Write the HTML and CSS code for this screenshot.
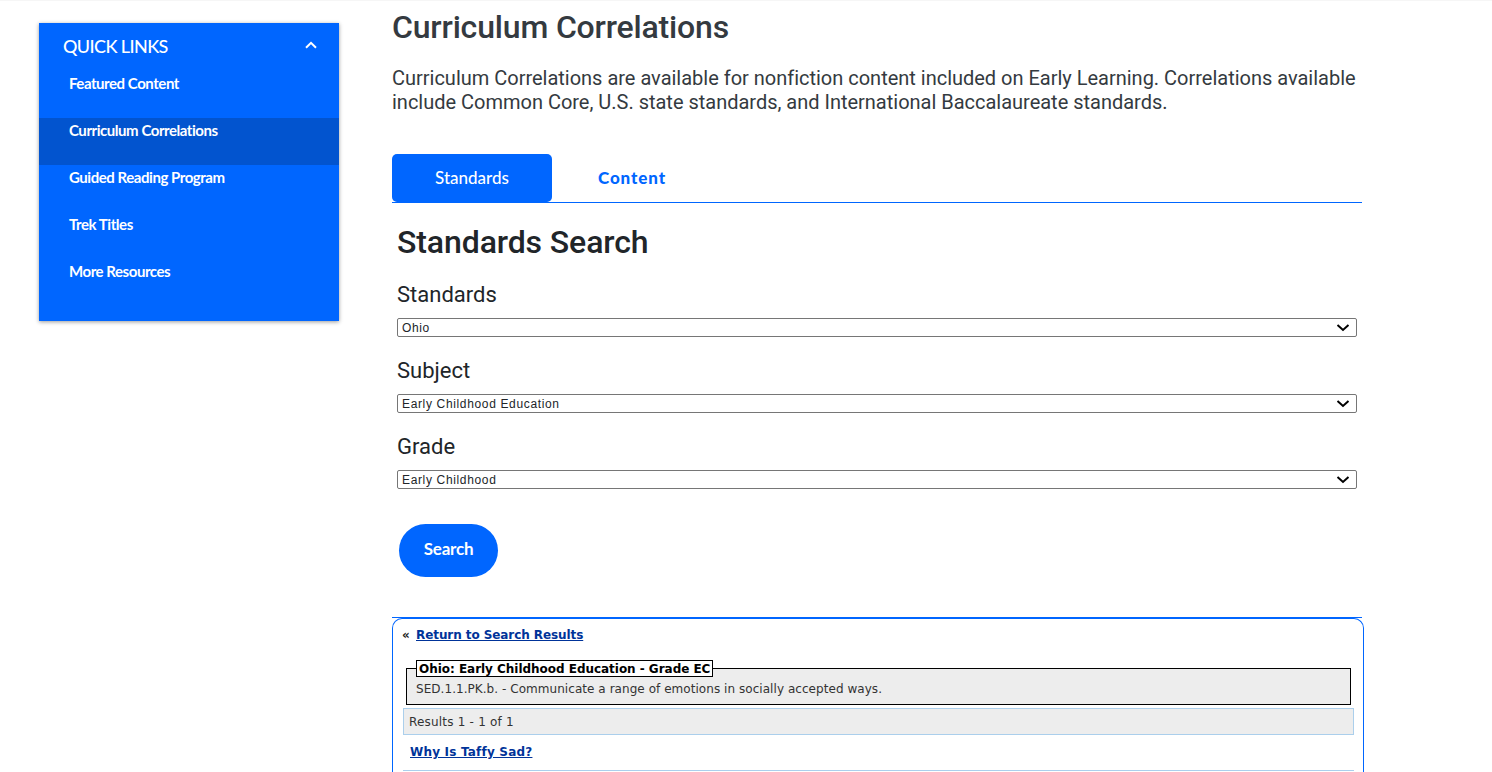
FILE: index.html
```html
<!DOCTYPE html>
<html lang="en">
<head>
  <meta charset="UTF-8" />
  <meta name="viewport" content="width=device-width, initial-scale=1.0" />
  <title>Curriculum Correlations</title>
  <link rel="stylesheet" href="styles.css">
</head>
<body>

<div class="page">
  <!-- quick links -->
  <aside class="quick">
    <div class="quickHead">
      <span>QUICK LINKS</span>
      <svg class="chev" width="12" height="8" viewBox="0 0 12 8" aria-hidden="true"><path d="M1 6.800 6 1.800l5 5" fill="none" stroke="#fff" stroke-width="2"/></svg>
    </div>
    <nav>
      <a href="#">Featured Content</a>
      <a href="#" class="current">Curriculum Correlations</a>
      <a href="#">Guided Reading Program</a>
      <a href="#">Trek Titles</a>
      <a href="#">More Resources</a>
    </nav>
  </aside>

  <main>
    <h1>Curriculum Correlations</h1>
    <p class="intro">Curriculum Correlations are available for nonfiction content included on Early Learning. Correlations available include Common Core, U.S. state standards, and International Baccalaureate standards.</p>

    <div class="tabs">
      <a href="#" class="tab active">Standards</a>
      <a href="#" class="tab">Content</a>
    </div>

    <!-- search form -->
    <section class="search">
      <h2>Standards Search</h2>
      <label for="std">Standards</label>
      <select id="std"><option>Ohio</option></select>
      <label for="sub">Subject</label>
      <select id="sub"><option>Early Childhood Education</option></select>
      <label for="gr">Grade</label>
      <select id="gr"><option>Early Childhood</option></select>
      <button type="button" class="go">Search</button>
    </section>

    <!-- results -->
    <section class="results">
      <div class="back"><span class="arrows">&laquo;</span><a href="#">Return to Search Results</a></div>
      <fieldset>
        <legend>Ohio: Early Childhood Education - Grade EC</legend>
        SED.1.1.PK.b. - Communicate a range of emotions in socially accepted ways.
      </fieldset>
      <div class="count">Results 1 - 1 of 1</div>
      <div class="item"><a href="#">Why Is Taffy Sad?</a></div>
    </section>
  </main>
</div>

</body>
</html>
```

FILE: styles.css
```css
* { box-sizing:border-box; margin:0; padding:0; }
body { font-family:Roboto,sans-serif; background:#fff; color:#212529; }
.page { display:flex; align-items:flex-start; height:772px; padding-left:39px; overflow:hidden; box-shadow:inset 0 1px 0 #f6f6f6; }

/* sidebar */
.quick { width:300px; height:298px; margin-top:23px; background:#06f; color:#fff;
         box-shadow:0 1px 4px rgba(0,0,0,.4); flex:none; }
.quickHead { display:flex; justify-content:space-between; align-items:center;
             height:48px; padding:0 22px 2px 24px; font:500 18px "Lato",sans-serif; letter-spacing:-.6px; }
.chev { margin-bottom:3px; }
.quick nav a { display:block; height:47px; padding:2px 0 0 30px; color:#fff; text-decoration:none;
               font:700 15px/20px "Lato",sans-serif; letter-spacing:-.45px; }
.quick nav a.current { background:#0254cf; }

/* main column */
main { width:972px; margin-left:53px; flex:none; }
h1 { font-size:32px; font-weight:500; line-height:36px; color:#343a40; margin-top:9px; letter-spacing:-.17px; }
.intro { width:970px; font-size:20px; line-height:24px; color:#343a40; margin-top:21px; letter-spacing:-.01px; }

.tabs { display:flex; width:970px; height:49px; margin-top:40px; border-bottom:1px solid #06f; }
.tab { width:160px; height:48px; border-radius:5px 5px 0 0; text-align:center;
       font:900 17px/47px "Lato",sans-serif; letter-spacing:.9px; color:#06f; text-decoration:none; }
.tab.active { background:#06f; color:#fff; border-radius:5px; font-weight:500; letter-spacing:0; }

.search { width:970px; height:415px; padding:20px 5px 0; border-bottom:1px solid #06f; }
h2 { font-size:32px; font-weight:500; line-height:38px; color:#212529; letter-spacing:-.1px; }
label { display:block; font-size:22px; line-height:26px; margin-top:21px; color:#212529; }
select { display:block; width:960px; height:19px; margin-top:10px; padding-left:4px; font:12px "Liberation Sans",sans-serif;
         letter-spacing:.65px; color:#212529; border:1px solid #767676; border-radius:2px; appearance:none;
         background:#fff url("data:image/svg+xml,%3Csvg xmlns='http://www.w3.org/2000/svg' width='14' height='8'%3E%3Cpath d='M1.500 1 7 6l5.500-5' fill='none' stroke='%23000' stroke-width='2'/%3E%3C/svg%3E") no-repeat right 6px center; }
.go { display:block; width:99px; height:53px; margin:35px 0 0 2px; padding-bottom:5px; border:none; border-radius:27px; background:#06f; color:#fff;
      font:700 17px "Lato",sans-serif; letter-spacing:-.2px; }

/* results box runs off the bottom of the page */
.results { width:972px; height:154px; border:1px solid #06f; border-bottom:none; border-radius:10px 10px 0 0; padding:0 9px 0 10px;
           font:12px "DejaVu Sans",sans-serif; color:#333; }
.results a { color:#003399; font-weight:700; }
.back { padding-top:9px; height:41px; font-weight:700; line-height:15px; margin-left:-1px; color:#222; }
.arrows { display:inline-block; width:14px; }
.back a { letter-spacing:-.08px; }
fieldset { margin:0 3px 0 3px; height:45px; background:#ededed; border:1px solid #000; padding:0 9px; line-height:15px; letter-spacing:.05px; }
legend { height:17px; background:#fff; border:1px solid #000; padding:1px 2px 0; font-weight:700; color:#000; line-height:15px; margin-bottom:5px; letter-spacing:-.03px; }
.count { height:27px; margin-top:3px; background:#ededed; border:1px solid #abcfec; padding:6px 5px 0; line-height:15px; letter-spacing:.2px; }
.item { height:36px; border-bottom:1px solid #abcfec; padding:10px 7px 0; line-height:15px; letter-spacing:.2px; }
```
